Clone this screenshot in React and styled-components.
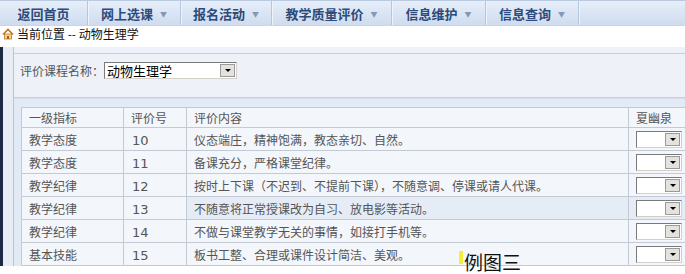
import React from 'react';
import styled, { createGlobalStyle } from 'styled-components';

const GlobalStyle = createGlobalStyle`
  html, body {
    margin: 0;
    padding: 0;
    background: #fff;
    overflow: hidden;
  }
  body {
    font-family: "Noto Sans CJK SC", "DejaVu Sans", sans-serif;
    font-size: 12px;
    color: #555;
  }
`;

const Page = styled.div`
  position: relative;
  width: 685px;
  height: 274px;
  overflow: hidden;
`;

const NavBar = styled.div`
  display: flex;
  height: 26px;
  background: linear-gradient(#e6eef9, #cfdcef);
  border-top: 1px solid #b9c9df;
  border-bottom: 1px solid #c9d6e8;
  box-sizing: border-box;
`;

const NavItem = styled.div`
  width: ${(p) => p.w}px;
  display: flex;
  align-items: center;
  justify-content: center;
  gap: 7px;
  font-size: 13px;
  font-weight: bold;
  color: #2c4b7a;
  border-right: 1px solid #b5c6de;
  box-shadow: 1px 0 0 #eef3fa;
  box-sizing: border-box;
`;

const Caret = styled.span`
  font-size: 7px;
  color: #8497b6;
  padding-top: 1px;
`;

const Crumb = styled.div`
  display: flex;
  align-items: center;
  gap: 3px;
  height: 15px;
  padding-left: 2px;
  color: #111;
  font-size: 12px;
`;

const Body = styled.div`
  display: flex;
  margin-top: 6px;
`;

const Edge = styled.div`
  flex: none;
  width: 14px;
  border-left: 3px solid #1c2a44;
  border-right: 1px solid #bcc6d3;
  background: #e7edf5;
  box-sizing: border-box;
`;

const Panel = styled.div`
  flex: 1;
  background: #eef2f8;
`;

const TopStrip = styled.div`
  height: 6px;
  border-bottom: 1px solid #c7cfda;
`;

const FormRow = styled.div`
  display: flex;
  align-items: center;
  height: 44px;
  padding: 0 0 10px 6px;
  border-bottom: 1px solid #c7cfda;
  box-sizing: border-box;
`;

const Label = styled.span`
  color: #555;
`;

const SelectBox = styled.div`
  display: flex;
  align-items: center;
  justify-content: space-between;
  width: ${(p) => p.w}px;
  height: 17px;
  background: #fff;
  border: 1px solid #7a7a7a;
  border-right-color: #d4d0c8;
  border-bottom-color: #d4d0c8;
  box-sizing: border-box;
  color: #000;
  font-size: 13px;
  padding-left: 2px;
`;

const DropBtn = styled.div`
  width: 15px;
  height: 13px;
  margin-right: 1px;
  background: #e4e2de;
  border: 1px solid #9a9a9a;
  box-sizing: border-box;
  display: flex;
  align-items: center;
  justify-content: center;
  &::after {
    content: '';
    border-left: 3px solid transparent;
    border-right: 3px solid transparent;
    border-top: 3px solid #000;
  }
`;

const TableWrap = styled.div`
  background: #e2eaf5;
  padding: 8px 0 0 7px;
  border-top: 1px solid #d6dde8;
`;

const Table = styled.table`
  border-collapse: collapse;
  width: 700px;
  table-layout: fixed;
  background: #f3f6fb;
`;

const Th = styled.td`
  height: 19px;
  border: 1px solid #c3cad4;
  padding: 0 0 0 7px;
  color: #555;
  white-space: nowrap;
  overflow: hidden;
`;

const Td = styled.td`
  height: 22px;
  border: 1px solid #c3cad4;
  padding: 0 0 0 7px;
  color: #555;
  white-space: nowrap;
  overflow: hidden;
  background: ${(p) => (p.hl ? '#e5ecf6' : 'transparent')};
`;

const Num = styled.span`
  display: inline-block;
  font-family: "DejaVu Sans", sans-serif;
  font-size: 13px;
  padding-top: 3px;
  padding-left: 1px;
`;

const Mark = styled.div`
  position: absolute;
  left: 459px;
  top: 251px;
  display: flex;
  align-items: flex-start;
  font-size: 19px;
  line-height: 21px;
  color: #111;
  &::before {
    content: '';
    width: 4px;
    height: 13px;
    background: #f4ee3a;
    margin-right: 1px;
  }
`;

const HomeIcon = () => (
  <svg width="12" height="12" viewBox="0 0 12 12">
    <path d="M1 6.5 L6 1.5 L11 6.5" fill="none" stroke="#c7741c" strokeWidth="1.6" />
    <rect x="2.5" y="6" width="7" height="5" fill="#f6d58a" stroke="#b8792a" strokeWidth="0.8" />
    <rect x="5" y="8" width="2" height="3" fill="#a85f1a" />
  </svg>
);

const navItems = [
  { t: '返回首页', w: 88 },
  { t: '网上选课', w: 93, c: true },
  { t: '报名活动', w: 91, c: true },
  { t: '教学质量评价', w: 120, c: true },
  { t: '信息维护', w: 94, c: true },
  { t: '信息查询', w: 93, c: true },
];

const rows = [
  ['教学态度', '10', '仪态端庄，精神饱满，教态亲切、自然。'],
  ['教学态度', '11', '备课充分，严格课堂纪律。'],
  ['教学纪律', '12', '按时上下课（不迟到、不提前下课），不随意调、停课或请人代课。'],
  ['教学纪律', '13', '不随意将正常授课改为自习、放电影等活动。', true],
  ['教学纪律', '14', '不做与课堂教学无关的事情，如接打手机等。'],
  ['基本技能', '15', '板书工整、合理或课件设计简洁、美观。'],
];

export default function App() {
  return (
    <Page>
      <GlobalStyle />
      <NavBar>
        {navItems.map((n) => (
          <NavItem key={n.t} w={n.w}>
            {n.t}
            {n.c && <Caret>▼</Caret>}
          </NavItem>
        ))}
      </NavBar>
      <Crumb>
        <HomeIcon />
        当前位置 -- 动物生理学
      </Crumb>
      <Body>
        <Edge />
        <Panel>
          <TopStrip />
          <FormRow>
            <Label>评价课程名称：</Label>
            <SelectBox w={133}>
              动物生理学
              <DropBtn />
            </SelectBox>
          </FormRow>
          <TableWrap>
            <Table>
              <colgroup>
                <col style={{ width: 102 }} />
                <col style={{ width: 63 }} />
                <col style={{ width: 442 }} />
                <col style={{ width: 93 }} />
              </colgroup>
              <tbody>
                <tr>
                  <Th>一级指标</Th>
                  <Th>评价号</Th>
                  <Th>评价内容</Th>
                  <Th>夏幽泉</Th>
                </tr>
                {rows.map((r) => (
                  <tr key={r[1]}>
                    <Td>{r[0]}</Td>
                    <Td><Num>{r[1]}</Num></Td>
                    <Td hl={r[3]}>{r[2]}</Td>
                    <Td hl={r[3]}>
                      <SelectBox w={46}>
                        <span />
                        <DropBtn />
                      </SelectBox>
                    </Td>
                  </tr>
                ))}
              </tbody>
            </Table>
          </TableWrap>
        </Panel>
      </Body>
      <Mark>例图三</Mark>
    </Page>
  );
}
